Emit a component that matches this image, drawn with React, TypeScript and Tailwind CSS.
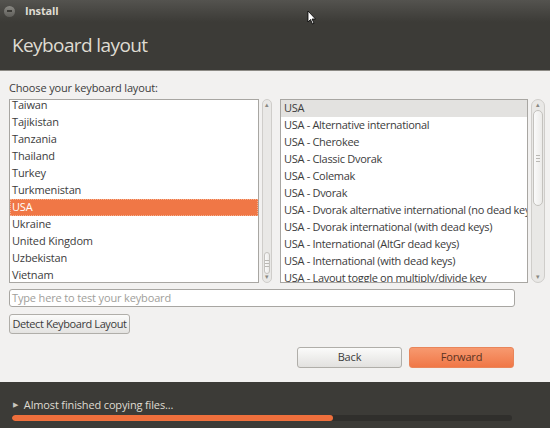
import React from "react";

const countries = [
  "Taiwan",
  "Tajikistan",
  "Tanzania",
  "Thailand",
  "Turkey",
  "Turkmenistan",
  "USA",
  "Ukraine",
  "United Kingdom",
  "Uzbekistan",
  "Vietnam",
];

const variants = [
  "USA",
  "USA - Alternative international",
  "USA - Cherokee",
  "USA - Classic Dvorak",
  "USA - Colemak",
  "USA - Dvorak",
  "USA - Dvorak alternative international (no dead keys)",
  "USA - Dvorak international (with dead keys)",
  "USA - International (AltGr dead keys)",
  "USA - International (with dead keys)",
  "USA - Layout toggle on multiply/divide key",
];

function Scrollbar({ thumbTop, thumbHeight, grip }: { thumbTop: number; thumbHeight: number; grip?: boolean }) {
  return (
    <div className="relative w-full h-full rounded-full border border-[#cfcdca] bg-[#e9e8e6]">
      <span className="absolute left-0 right-0 top-[1px] text-center text-[7px] leading-[8px] text-[#8a8883]">▴</span>
      <div
        className="absolute left-[1px] right-[1px] rounded-full border border-[#c4c2be] bg-gradient-to-r from-[#fafafa] to-[#ecebe9] flex flex-col items-center justify-center gap-[2px]"
        style={{ top: thumbTop, height: thumbHeight }}
      >
        {grip && (
          <>
            <div className="w-[4px] h-px bg-[#bab8b4]" />
            <div className="w-[4px] h-px bg-[#bab8b4]" />
            <div className="w-[4px] h-px bg-[#bab8b4]" />
          </>
        )}
      </div>
      <span className="absolute left-0 right-0 bottom-[1px] text-center text-[7px] leading-[8px] text-[#8a8883]">▾</span>
    </div>
  );
}

export default function App() {
  return (
    <div
      className="relative w-[550px] h-[428px] overflow-hidden flex flex-col bg-[#f2f1f0] text-[#3c3c3c] tracking-[-0.15px]"
      style={{ fontFamily: '"Open Sans", "Noto Sans", sans-serif' }}
    >
      {/* Title bar */}
      <div className="h-[22px] flex items-center gap-[10px] px-[4px] bg-gradient-to-b from-[#54534f] to-[#3c3b37]">
        <div className="w-[11px] h-[11px] rounded-full bg-gradient-to-b from-[#8a8984] to-[#5f5e5a] flex items-center justify-center">
          <div className="w-[5px] h-[2px] bg-[#3a3935]" />
        </div>
        <span className="text-[11px] font-bold text-[#dfdbd2]">Install</span>
      </div>

      {/* Header */}
      <div className="h-[48px] bg-[#3c3b37] flex items-center pl-[12px] pb-[2px]">
        <h1 className="text-[19px] text-[#dfdbd2] tracking-[-0.6px]">Keyboard layout</h1>
      </div>
      <div className="h-px bg-[#8c8a85]" />

      {/* Content */}
      <div className="flex-1 flex flex-col pl-[9px] pt-[10px]">
        <div className="text-[11px] leading-[14px] h-[18px]">Choose your keyboard layout:</div>

        <div className="flex h-[184px]">
          <div className="w-[250px] h-full border border-[#a8a6a2] bg-white overflow-hidden">
            <div className="-mt-[3px]">
              {countries.map((c) => (
                <div
                  key={c}
                  className={`h-[17px] flex items-center px-[2px] text-[11px] ${
                    c === "USA" ? "bg-[#f07746] text-white outline outline-1 outline-dotted outline-[#f5b08f] -outline-offset-1" : ""
                  }`}
                >
                  {c}
                </div>
              ))}
            </div>
          </div>
          <div className="ml-[3px] w-[10px] h-full">
            <Scrollbar thumbTop={152} thumbHeight={22} grip />
          </div>

          <div className="ml-[8px] w-[248px] h-full border border-[#a8a6a2] bg-white overflow-hidden">
            {variants.map((v) => (
              <div
                key={v}
                className={`h-[17px] flex items-center px-[3px] text-[11px] whitespace-nowrap tracking-[-0.3px] ${
                  v === "USA" ? "bg-[#e3e2e0]" : ""
                }`}
              >
                {v}
              </div>
            ))}
          </div>
          <div className="ml-[3px] w-[14px] h-full">
            <Scrollbar thumbTop={10} thumbHeight={96} grip />
          </div>
        </div>

        <div className="mt-[6px] w-[506px] h-[18px] border border-[#a8a6a2] rounded-[3px] bg-white flex items-center px-[2px] text-[11px] text-[#a09e9a]">
          Type here to test your keyboard
        </div>

        <button className="mt-[7px] w-[121px] h-[20px] border border-[#b0aea9] rounded-[3px] bg-gradient-to-b from-[#fbfbfa] to-[#e4e3e1] text-[11px] text-[#3c3c3c] flex items-center justify-center whitespace-nowrap tracking-[-0.4px]">
          Detect Keyboard Layout
        </button>

        <div className="mt-[13px] flex gap-[7px] pl-[288px]">
          <button className="w-[105px] h-[21px] border border-[#b0aea9] rounded-[3px] bg-gradient-to-b from-[#fbfbfa] to-[#e2e1df] text-[11px] text-[#3c3c3c] flex items-center justify-center">
            Back
          </button>
          <button className="w-[105px] h-[21px] border border-[#e9855a] rounded-[3px] bg-gradient-to-b from-[#f7996f] to-[#f07746] text-[11px] text-[#5a3322] flex items-center justify-center">
            Forward
          </button>
        </div>
      </div>

      {/* Bottom status */}
      <div className="h-[46px] bg-[#3c3b37] flex flex-col px-[12px] pt-[16px]">
        <div className="flex items-center gap-[6px] h-[14px]">
          <span className="text-[7px] text-[#c9c5bd] ml-[1px]">▶</span>
          <span className="text-[11px] text-[#dfdbd2]">Almost finished copying files...</span>
        </div>
        <div className="mt-[3px] w-[500px] h-[6px] rounded-full bg-[#302f2c] overflow-hidden">
          <div className="h-full rounded-full bg-[#ee6f3c]" style={{ width: 321 }} />
        </div>
      </div>

      {/* Mouse pointer */}
      <svg className="absolute left-[307px] top-[10px]" width="10" height="15" viewBox="0 0 10 15">
        <path d="M1 1 L1 12 L3.5 9.5 L5.5 14 L7 13.3 L5 9 L8.5 9 Z" fill="#fff" stroke="#000" strokeWidth="0.8" />
      </svg>
    </div>
  );
}
